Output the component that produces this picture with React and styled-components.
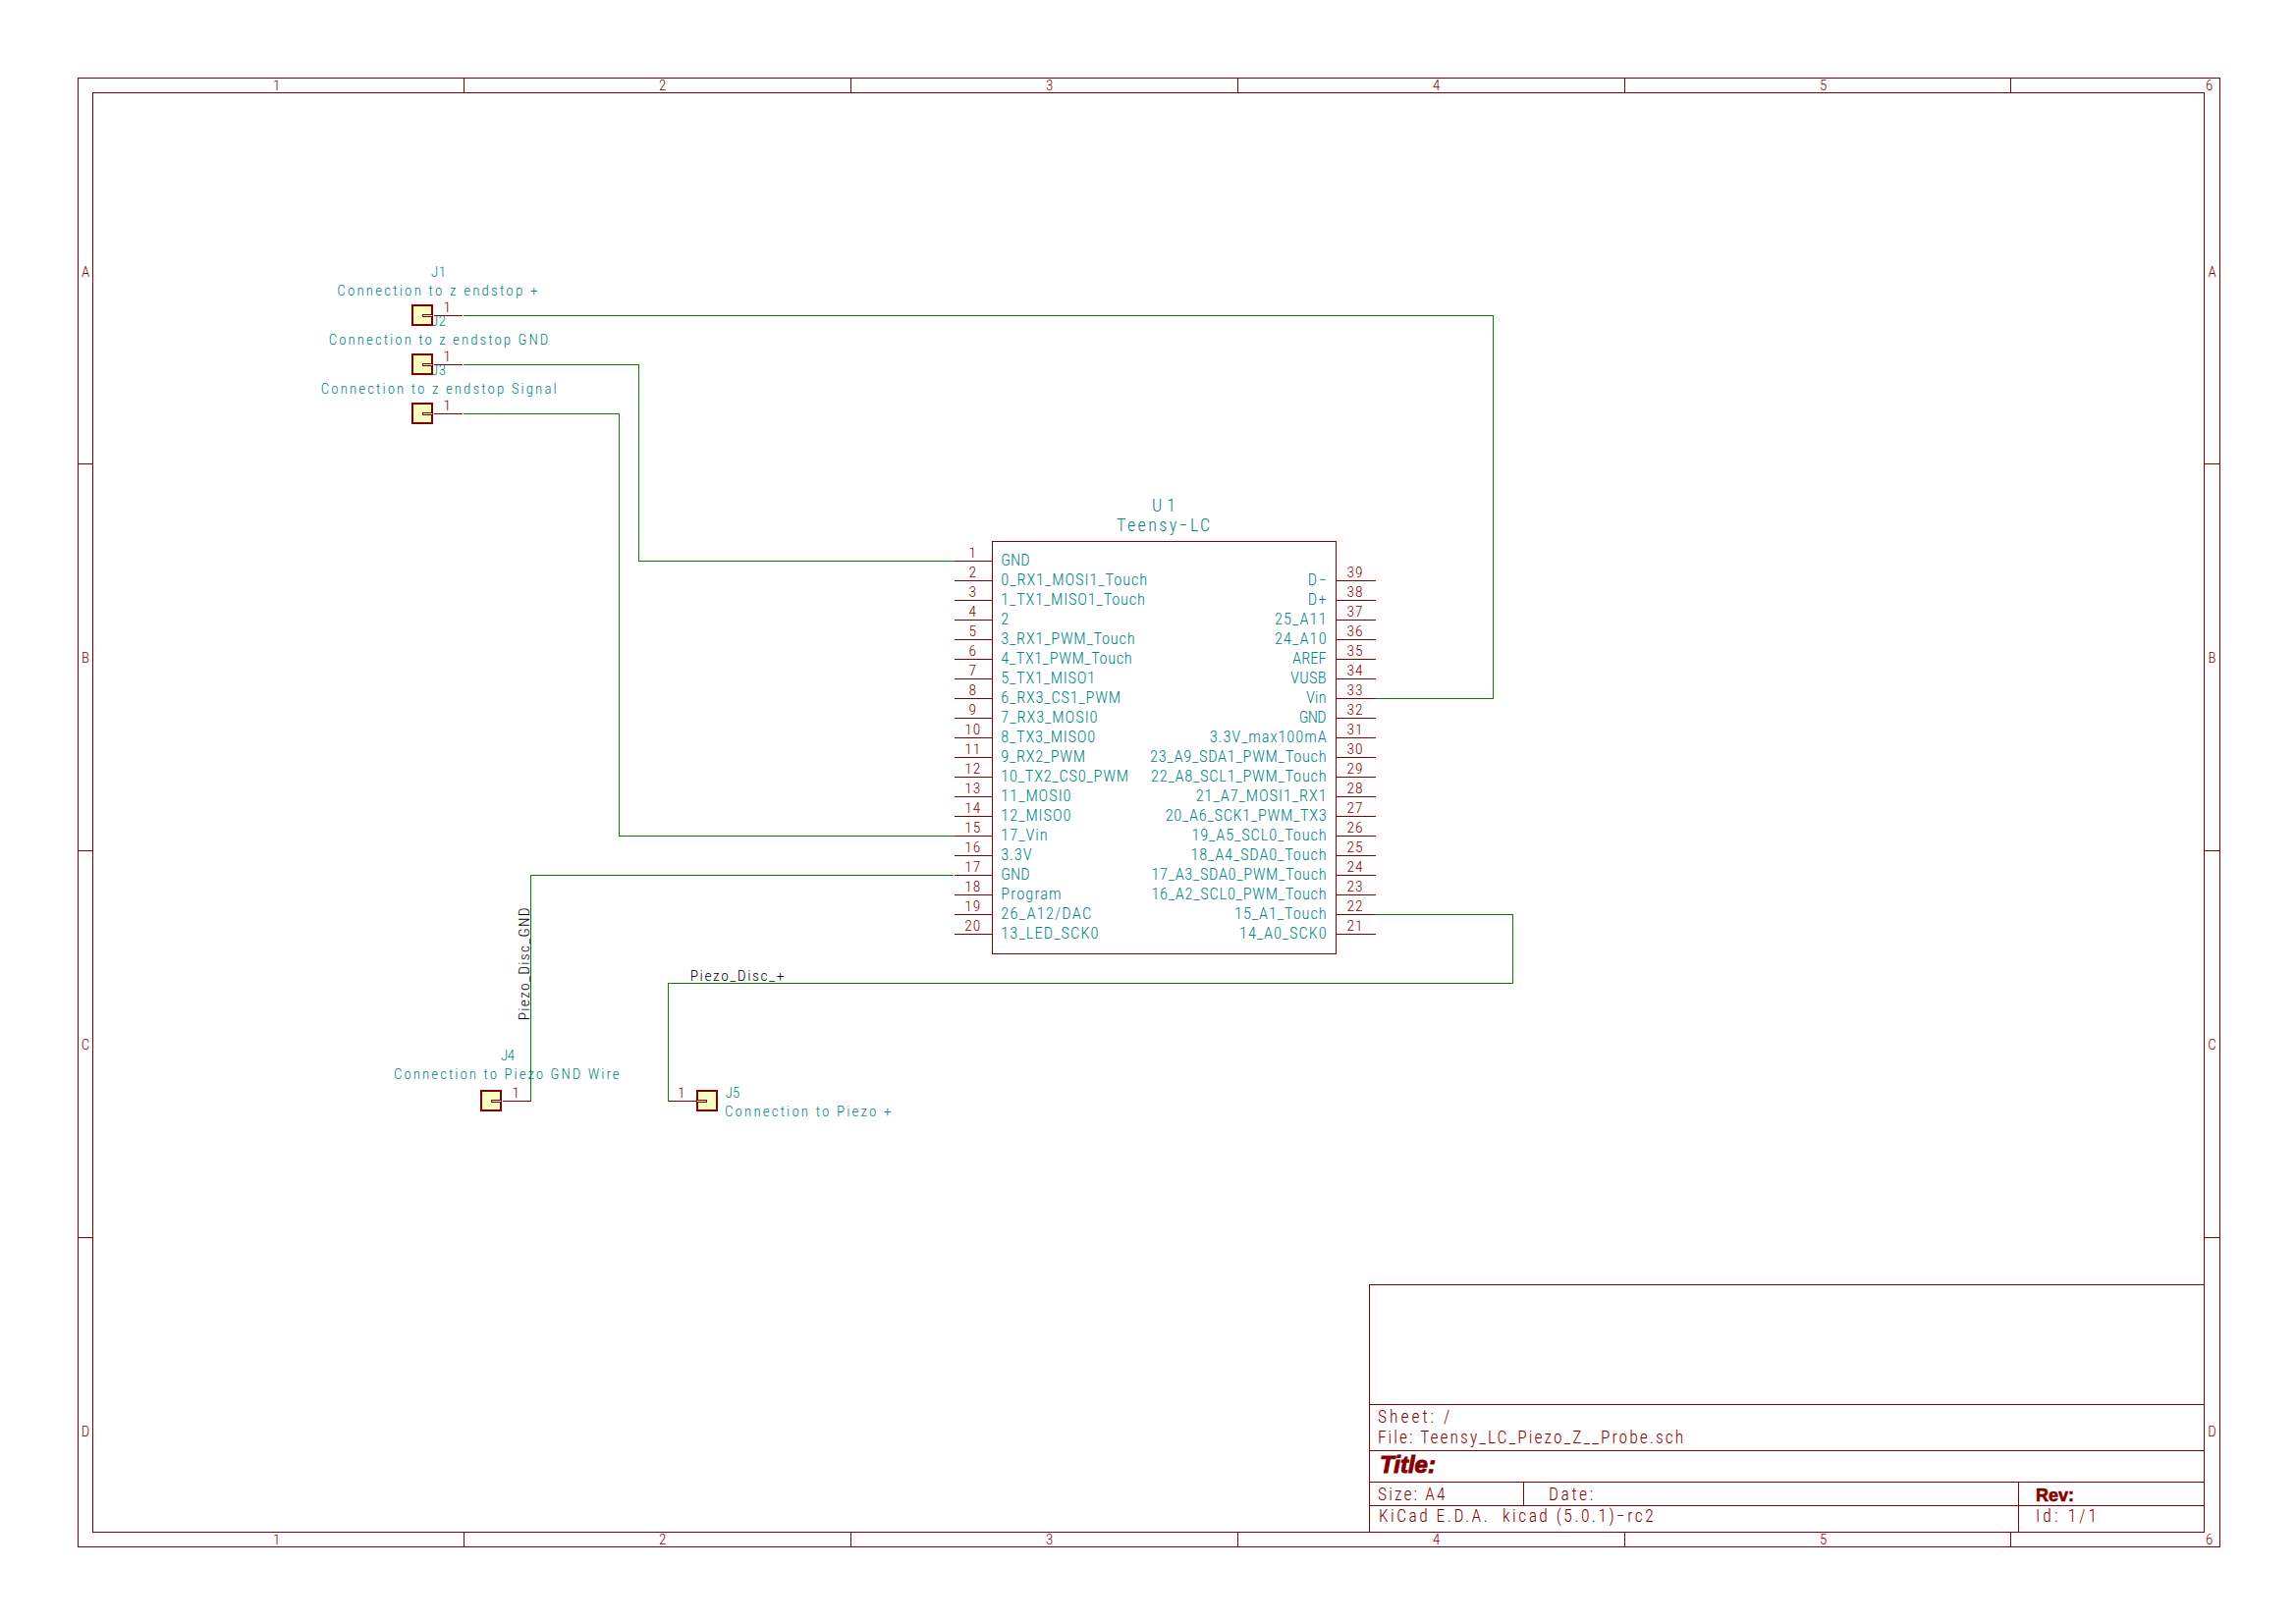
import React from "react";
import styled, { createGlobalStyle } from "styled-components";

const RED = "#840000";
const TEAL = "#008484";
const GREEN = "#008400";
const CAD_FONT = `Roboto, "Liberation Sans", sans-serif`;

const GlobalStyle = createGlobalStyle`
  html, body {
    margin: 0;
    background: #fff;
  }
`;

const Page = styled.div`
  box-sizing: border-box;
  width: 2338px;
  height: 1653px;
  padding: 79px 77px 77px 79px;
  font-family: ${CAD_FONT};
  font-weight: 350;
  font-stretch: 75%;
  color: ${RED};
`;

const Frame = styled.div`
  box-sizing: border-box;
  width: 2182px;
  height: 1497px;
  border: 1px solid ${RED};
  display: grid;
  grid-template-columns: 14px 1fr 15px;
  grid-template-rows: 14px 1fr 14px;
`;

const ColumnRuler = styled.div`
  grid-column: 1 / -1;
  grid-row: ${(p) => p.$row};
  display: flex;
`;

const RowRuler = styled.div`
  grid-row: 1 / -1;
  grid-column: ${(p) => p.$column};
  display: flex;
  flex-direction: column;
`;

const ColumnCell = styled.div`
  box-sizing: border-box;
  flex: ${(p) => (p.$last ? "1" : `0 0 ${p.$size}px`)};
  padding-left: 198px;
  font-size: 15px;
  line-height: 15px;
  border-right: ${(p) => (p.$last ? "none" : `1px solid ${RED}`)};
`;

const RowCell = styled.div`
  box-sizing: border-box;
  flex: ${(p) => (p.$last ? "1" : `0 0 ${p.$size}px`)};
  padding-top: 189px;
  font-size: 15px;
  line-height: 16px;
  text-align: center;
  border-bottom: ${(p) => (p.$last ? "none" : `1px solid ${RED}`)};
`;

const Canvas = styled.div`
  grid-column: 2;
  grid-row: 2;
  box-sizing: border-box;
  border: 1px solid ${RED};
  display: grid;
  min-height: 0;
`;

const Drawing = styled.svg`
  grid-area: 1 / 1;
  display: block;
`;

const TitleBlock = styled.div`
  grid-area: 1 / 1;
  justify-self: end;
  align-self: end;
  box-sizing: border-box;
  width: 850px;
  height: 252px;
  border-top: 1px solid ${RED};
  border-left: 1px solid ${RED};
  display: grid;
  grid-template-columns: 157px 504px 1fr;
  grid-template-rows: 122px 47px 32px 24px 26px;
`;

const NotesCell = styled.div`
  grid-column: 1 / -1;
  border-bottom: 1px solid ${RED};
`;

const SheetCell = styled.div`
  grid-column: 1 / -1;
  border-bottom: 1px solid ${RED};
  padding: 2px 0 0 8px;
`;

const TitleCell = styled.div`
  grid-column: 1 / -1;
  border-bottom: 1px solid ${RED};
  padding-left: 10px;
  font-family: "Liberation Sans", sans-serif;
  font-weight: 700;
  font-style: italic;
  font-size: 24px;
  line-height: 28px;
  -webkit-text-stroke: 1px ${RED};
`;

const InfoCell = styled.div`
  box-sizing: border-box;
  grid-column: ${(p) => p.$span || "auto"};
  border-bottom: ${(p) => (p.$ruled ? `1px solid ${RED}` : "none")};
  border-right: ${(p) => (p.$divider ? `1px solid ${RED}` : "none")};
  padding-left: ${(p) => p.$indent}px;
  padding-top: ${(p) => p.$top || 0}px;
`;

const InfoLine = styled.div`
  font-size: 17.5px;
  line-height: ${(p) => p.$line || 21}px;
  letter-spacing: ${(p) => p.$spacing}px;
  white-space: pre;
`;

const RevLabel = styled.div`
  font-family: "Liberation Sans", sans-serif;
  font-weight: 700;
  font-size: 18px;
  line-height: 22px;
  -webkit-text-stroke: 0.6px ${RED};
`;

const Wire = styled.path`
  fill: none;
  stroke: ${GREEN};
  stroke-width: 1;
  shape-rendering: crispEdges;
`;

const SymbolLine = styled.path`
  fill: ${(p) => p.$fill || "none"};
  stroke: ${RED};
  stroke-width: 1;
  shape-rendering: crispEdges;
`;

const ConnectorBody = styled.rect`
  fill: #ffffc2;
  stroke: ${RED};
  stroke-width: 2;
  shape-rendering: crispEdges;
`;

const CadText = styled.text`
  font-family: ${CAD_FONT};
  font-weight: 350;
  font-stretch: 75%;
  white-space: pre;
`;

const PinNumber = styled(CadText)`
  font-size: 15.5px;
  letter-spacing: 1px;
  fill: ${RED};
  text-anchor: middle;
`;

const PinName = styled(CadText)`
  font-size: 16.5px;
  fill: ${TEAL};
`;

const PartLabel = styled(CadText)`
  font-size: 15px;
  fill: ${TEAL};
`;

const PartTitle = styled(CadText)`
  font-size: 18px;
  fill: ${TEAL};
`;

const NetLabel = styled(CadText)`
  font-size: 15.5px;
  fill: #000;
`;

const columnSizes = [393, 394, 394, 394, 393];
const rowSizes = [393, 394, 394];

const leftPins = [
  ["GND", 29.3], ["0_RX1_MOSI1_Touch", 149], ["1_TX1_MISO1_Touch", 146.7], ["2", 8],
  ["3_RX1_PWM_Touch", 136.3], ["4_TX1_PWM_Touch", 133.3], ["5_TX1_MISO1", 96],
  ["6_RX3_CS1_PWM", 121.7], ["7_RX3_MOSI0", 98.3], ["8_TX3_MISO0", 96],
  ["9_RX2_PWM", 85.7], ["10_TX2_CS0_PWM", 129.7], ["11_MOSI0", 71.3], ["12_MISO0", 71.3],
  ["17_Vin", 47.3], ["3.3V", 31.3], ["GND", 29.3], ["Program", 61.3],
  ["26_A12/DAC", 92], ["13_LED_SCK0", 99.3],
];

const rightPins = [
  ["D\u2212", 19], ["D+", 19], ["25_A11", 52.7], ["24_A10", 52.7], ["AREF", 34.7],
  ["VUSB", 36.7], ["Vin", 20.7], ["GND", 28], ["3.3V_max100mA", 119],
  ["23_A9_SDA1_PWM_Touch", 179.7], ["22_A8_SCL1_PWM_Touch", 178.7], ["21_A7_MOSI1_RX1", 133],
  ["20_A6_SCK1_PWM_TX3", 164], ["19_A5_SCL0_Touch", 137.3], ["18_A4_SDA0_Touch", 138.3],
  ["17_A3_SDA0_PWM_Touch", 178.3], ["16_A2_SCL0_PWM_Touch", 178.3], ["15_A1_Touch", 93.7],
  ["14_A0_SCK0", 88.7],
];

const wires = [
  "M471 320H1520V710H1400",
  "M471 370H650V570H971",
  "M471 420H630V850H971",
  "M540 1120V890H970",
  "M680 1120V1000H1540V930H1400",
];

// x is the centre of the body, side is the way the pin leaves it
const connectors = [
  { x: 430, y: 320, side: 1 },
  { x: 430, y: 370, side: 1 },
  { x: 430, y: 420, side: 1 },
  { x: 500, y: 1120, side: 1 },
  { x: 720, y: 1120, side: -1 },
];

const partLabels = [
  { text: "J1", x: 439, y: 280.7, width: 15 },
  { text: "Connection to z endstop +", x: 343.3, y: 300, width: 204 },
  { text: "J2", x: 439, y: 330.7, width: 15 },
  { text: "Connection to z endstop GND", x: 334.7, y: 350, width: 223.6 },
  { text: "J3", x: 439, y: 380.7, width: 15 },
  { text: "Connection to z endstop Signal", x: 326.7, y: 400, width: 240 },
  { text: "J4", x: 510, y: 1079.3, width: 14 },
  { text: "Connection to Piezo GND Wire", x: 401, y: 1098.3, width: 229.7 },
  { text: "J5", x: 738.7, y: 1116.7, width: 14.6 },
  { text: "Connection to Piezo +", x: 738, y: 1136, width: 169.3 },
];

function Connector({ x, y, side }) {
  const tip = x + side * 11;
  const end = x + side * 40;
  const left = Math.min(x, tip);
  return (
    <>
      <ConnectorBody x={x - 10} y={y - 10} width={20} height={20} />
      <g transform="translate(0.5 0.5)">
        <SymbolLine d={`M${left} ${y - 1}h10v2h-10z`} $fill="#ffffc2" />
        <SymbolLine d={`M${tip} ${y}H${end}`} />
      </g>
      <PinNumber x={x + side * 25.7} y={y - 2.7}>1</PinNumber>
    </>
  );
}

function Schematic() {
  return (
    <Drawing width={2149} height={1465} viewBox="95 94 2149 1465">
      {partLabels.map((label) => (
        <PartLabel key={label.text} x={label.x} y={label.y} textLength={label.width} lengthAdjust="spacing">
          {label.text}
        </PartLabel>
      ))}
      <g transform="translate(0.5 0.5)">
        {wires.map((d) => (
          <Wire key={d} d={d} />
        ))}
        <SymbolLine d="M1010 550H1360V970H1010Z" />
        {leftPins.map((_, i) => (
          <SymbolLine key={i} d={`M971 ${570 + i * 20}H1010`} />
        ))}
        {rightPins.map((_, i) => (
          <SymbolLine key={i} d={`M1360 ${590 + i * 20}H1400`} />
        ))}
      </g>
      {connectors.map((c) => (
        <Connector key={`${c.x}-${c.y}`} {...c} />
      ))}

      <PartTitle x={1173} y={520} textLength={24} lengthAdjust="spacing">U1</PartTitle>
      <PartTitle x={1137} y={540} textLength={95.3} lengthAdjust="spacing">Teensy−LC</PartTitle>

      {leftPins.map(([name, width], i) => (
        <React.Fragment key={i}>
          <PinNumber x={990.7} y={567.3 + i * 20}>{i + 1}</PinNumber>
          <PinName x={1019.3} y={574.7 + i * 20} textLength={width} lengthAdjust="spacing">{name}</PinName>
        </React.Fragment>
      ))}
      {rightPins.map(([name, width], i) => (
        <React.Fragment key={i}>
          <PinNumber x={1380} y={587.3 + i * 20}>{39 - i}</PinNumber>
          <PinName x={1350.7 - width} y={594.7 + i * 20} textLength={width} lengthAdjust="spacing">{name}</PinName>
        </React.Fragment>
      ))}

      <NetLabel x={702.7} y={998.3} textLength={95.6} lengthAdjust="spacing">Piezo_Disc_+</NetLabel>
      <NetLabel transform="translate(538.5 1038.3) rotate(-90)" textLength={115} lengthAdjust="spacing">
        Piezo_Disc_GND
      </NetLabel>
    </Drawing>
  );
}

export default function App() {
  return (
    <Page>
      <GlobalStyle />
      <Frame>
        {[1, 3].map((row) => (
          <ColumnRuler key={row} $row={row}>
            {columnSizes.map((size, i) => (
              <ColumnCell key={i} $size={size}>{i + 1}</ColumnCell>
            ))}
            <ColumnCell $last>6</ColumnCell>
          </ColumnRuler>
        ))}
        {[1, 3].map((column) => (
          <RowRuler key={column} $column={column}>
            {rowSizes.map((size, i) => (
              <RowCell key={i} $size={size}>{"ABC"[i]}</RowCell>
            ))}
            <RowCell $last>D</RowCell>
          </RowRuler>
        ))}
        <Canvas>
          <Schematic />
          <TitleBlock>
            <NotesCell />
            <SheetCell>
              <InfoLine $spacing={3}>Sheet: /</InfoLine>
              <InfoLine $spacing={2.02}>File: Teensy_LC_Piezo_Z__Probe.sch</InfoLine>
            </SheetCell>
            <TitleCell>Title:</TitleCell>
            <InfoCell $ruled $divider $indent={8} $top={2}>
              <InfoLine $spacing={2.1}>Size: A4</InfoLine>
            </InfoCell>
            <InfoCell $ruled $divider $indent={25} $top={2}>
              <InfoLine $spacing={2.6}>Date:</InfoLine>
            </InfoCell>
            <InfoCell $ruled $indent={17} $top={2}>
              <RevLabel>Rev:</RevLabel>
            </InfoCell>
            <InfoCell $span="1 / 3" $divider $indent={9}>
              <InfoLine $line={20} $spacing={2.45}>KiCad E.D.A.  kicad (5.0.1)−rc2</InfoLine>
            </InfoCell>
            <InfoCell $indent={17}>
              <InfoLine $line={20} $spacing={3.1}>Id: 1/1</InfoLine>
            </InfoCell>
          </TitleBlock>
        </Canvas>
      </Frame>
    </Page>
  );
}
